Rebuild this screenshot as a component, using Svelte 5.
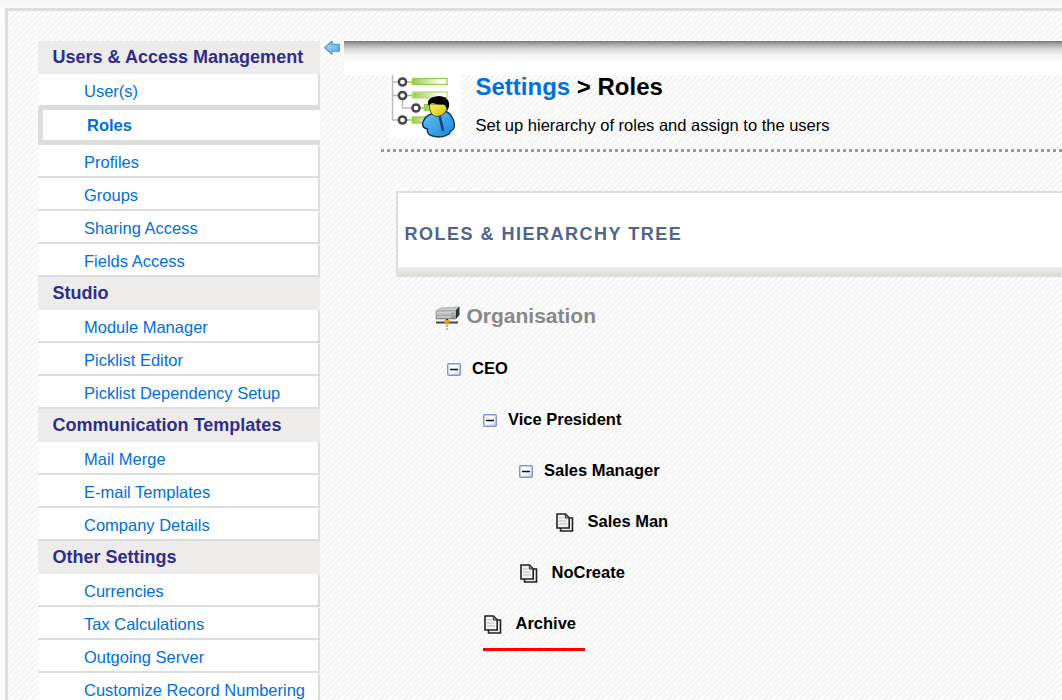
<script>
  const groups = [
    { title: 'Users & Access Management', items: ['User(s)', 'Roles', 'Profiles', 'Groups', 'Sharing Access', 'Fields Access'] },
    { title: 'Studio', items: ['Module Manager', 'Picklist Editor', 'Picklist Dependency Setup'] },
    { title: 'Communication Templates', items: ['Mail Merge', 'E-mail Templates', 'Company Details'] },
    { title: 'Other Settings', items: ['Currencies', 'Tax Calculations', 'Outgoing Server', 'Customize Record Numbering'] }
  ];
  const active = 'Roles';
  const roles = [
    { name: 'CEO', depth: 0, parent: true },
    { name: 'Vice President', depth: 1, parent: true },
    { name: 'Sales Manager', depth: 2, parent: true },
    { name: 'Sales Man', depth: 3 },
    { name: 'NoCreate', depth: 2 },
    { name: 'Archive', depth: 1, marked: true }
  ];
</script>

<div class="page">
  <div class="frame">
    <nav>
      {#each groups as group}
        <h3>{group.title}</h3>
        {#each group.items as item, i}
          <a href="#top" class:active={item === active} class:before={group.items[i + 1] === active}>{item}</a>
        {/each}
      {/each}
    </nav>
    <svg class="arrow" width="17" height="15" viewBox="0 0 17 15">
      <defs><linearGradient id="ar" x2="1" y2="1"><stop stop-color="#a9dcf9" /><stop offset="1" stop-color="#58aeea" /></linearGradient></defs>
      <path d="M.8 7.7 8 1.2V4.4H15.3V11.2H8V14.2Z" fill="url(#ar)" stroke="#4e9acb" stroke-width="1.2" stroke-linejoin="round" />
      <path d="M12.7 4.7v6" stroke="#6cb2df" />
    </svg>
    <main>
      <div class="shade"></div>
      <header>
        <svg class="logo" width="72" height="67" viewBox="0 0 72 67">
          <defs>
            <linearGradient id="bar"><stop stop-color="#9cc94d" /><stop offset=".85" stop-color="#fff" /></linearGradient>
            <linearGradient id="face" x2="1" y2="1"><stop stop-color="#fff568" /><stop offset="1" stop-color="#c5bd00" /></linearGradient>
            <linearGradient id="coat" x2="1" y2="1"><stop stop-color="#68c5fb" /><stop offset="1" stop-color="#1686d5" /></linearGradient>
            <radialGradient id="shadow"><stop stop-color="#888" /><stop offset="1" stop-color="#fff" stop-opacity="0" /></radialGradient>
          </defs>
          <rect width="72" height="63" fill="#fff" />
          <path d="M3.5 0V45H10M3.5 7H10M3.5 20.5H10M13.5 24V33H24" fill="none" stroke="#bbb" stroke-width="1.5" />
          <g stroke="#9acb4a" stroke-width="1.3" fill="url(#bar)">
            <path d="M17 7H24M17 20.5H24M31 33H36M17 45H24" />
            <rect x="23.5" y="3.5" width="34.5" height="6" />
            <rect x="23.5" y="17" width="34.5" height="6" stroke="#b9dc82" />
            <rect x="35.5" y="29.5" width="22" height="6" />
            <rect x="23.5" y="42" width="24" height="6" />
          </g>
          <g fill="#fff" stroke="#484848" stroke-width="2.5">
            <circle cx="13.5" cy="7" r="3.6" /><circle cx="13.5" cy="20.5" r="3.6" />
            <circle cx="27" cy="33" r="3.6" /><circle cx="13.5" cy="45" r="3.6" />
          </g>
          <ellipse cx="55" cy="58" rx="17" ry="6" fill="url(#shadow)" />
          <path d="M42 39Q36 41 33.7 48Q33 53 38.5 54Q37.5 59 42 60.5Q52 64 60 59Q61 56 64.5 54Q67 50 63.5 43Q61 38 57 36.5Z" fill="url(#coat)" stroke="#17344f" stroke-width="1.4" />
          <path d="M50.5 41 53 51 54 56" fill="none" stroke="#123f86" stroke-width="2.6" />
          <path d="M40.5 29Q40 41 48 41.5Q58 41 59 29Z" fill="url(#face)" stroke="#333" stroke-width=".8" />
          <path d="M39.5 31Q37 25 43 22.5Q50 19.5 56.5 22.5Q61 26 60 32L58 36Q58 32 55 29.5Q48 30 44 28Q41 28 39.5 31Z" fill="#050505" />
        </svg>
        <div class="titles">
          <h1><a href="#top">Settings</a> &gt; Roles</h1>
          <p>Set up hierarchy of roles and assign to the users</p>
        </div>
      </header>
      <section>
        <h2>Roles &amp; Hierarchy Tree</h2>
        <div class="lip"></div>
      </section>
      <div class="tree">
        <div class="org">
          <svg width="26" height="25" viewBox="0 0 26 25">
            <defs><linearGradient id="srv" x2="0" y2="1"><stop stop-color="#e2e2e2" /><stop offset=".4" stop-color="#bbb" /><stop offset="1" stop-color="#858585" /></linearGradient></defs>
            <path d="M5 3 24 2 21 6H1Z" fill="#ccc" stroke="#999" stroke-width=".6" />
            <path d="M1 6H21V14H1Z" fill="url(#srv)" stroke="#888" stroke-width=".7" />
            <path d="M21 5 24.5 1.5V10L21 14Z" fill="#333" />
            <path d="M2 12H16" stroke="#e8e8e8" /><path d="M16 8.5H19" stroke="#43d44f" stroke-width="2" />
            <path d="M12 14V18M1 17.5H23" stroke="#444" stroke-width="2.2" />
            <path d="M9.5 15H14.5V19.5H9.5Z" fill="#ee9c24" /><path d="M12 20V25" stroke="#999" stroke-width="1.4" stroke-dasharray="2 1" />
          </svg>
          <b>Organisation</b>
        </div>
        {#each roles as role}
          <div class="role" style:padding-left="{role.depth * 36}px">
            {#if role.parent}
              <svg class="toggle" width="14" height="13" viewBox="0 0 14 13">
                <defs><linearGradient id="tg" x2="1" y2="1"><stop offset=".4" stop-color="#fff" /><stop offset="1" stop-color="#cbd6ef" /></linearGradient></defs>
                <rect x=".75" y=".75" width="12.5" height="11.5" rx="1" fill="url(#tg)" stroke="#8496cf" stroke-width="1.5" />
                <path d="M3 6.5H11" stroke="#111" stroke-width="1.5" />
              </svg>
            {:else}
              <svg class="doc" width="18" height="19" viewBox="0 0 18 19">
                <path d="M4.5 5H16.5V18H4.5Z" fill="#eee" stroke="#222" stroke-width="1.6" />
                <path d="M1 1H9.5L13.2 4.8V15H1Z" fill="#f2f2f2" stroke="#222" stroke-width="1.6" />
                <path d="M9.3 1V5H13.3Z" fill="#999" stroke="#333" />
                <path d="M3 5H7.5M3 8H10M3 11H11" stroke="#bbb" />
              </svg>
            {/if}
            <b>{role.name}</b>
            {#if role.marked}<i></i>{/if}
          </div>
        {/each}
      </div>
    </main>
  </div>
</div>

<style>
  :global(body) { overflow: hidden; font-family: "Liberation Sans", Arial, sans-serif; }
  .page { box-sizing: border-box; width: 1062px; height: 700px; padding: 8px 0 0 5px; overflow: hidden; background: linear-gradient(#f7f7f7, #fff 22px); }
  .frame { box-sizing: border-box; height: 800px; display: flex; align-items: flex-start; padding: 30px 0 0 30px; border: solid #ddd; border-width: 3px 0 0 3px; background: repeating-linear-gradient(135deg, #fff 0 1.4px, #f1f1f1 2.4px 3.2px, #fff 4.2426px); }
  a { color: #0070d9; text-decoration: none; }
  nav { width: 282px; flex: none; }
  h3 { box-sizing: border-box; height: 33px; margin: 0; padding-left: 14.5px; background: #eeeceb; color: #2f2d8b; font-size: 18.03px; line-height: 32px; white-space: nowrap; }
  nav a { box-sizing: border-box; display: block; height: 33px; padding-left: 46px; border: solid #ddd; border-width: 0 2px 2px 0; border-top-right-radius: 3px; background: #fff; font-size: 16.5px; line-height: 35px; white-space: nowrap; }
  nav a.before { height: 31px; border-bottom: 0; }
  nav a.active { height: 40px; padding-left: 44px; border-width: 5px 0 5px 5px; border-radius: 3px 0 0 0; font-weight: bold; line-height: 31px; }
  .arrow { flex: none; width: 17px; margin: -1px 3px 0 4px; }
  main { flex: 1; min-width: 0; }
  .shade { height: 34px; background: linear-gradient(#777 0, #a5a5a5 3px, #d7d7d7 8px, #f6f6f6 15px, #fff 21px); }
  header { display: flex; height: 74px; margin-left: 37px; padding-left: 8px; border-bottom: 3px dotted #999; }
  header .titles { margin-left: 14.5px; }
  h1 { margin: -2px 0 0; font-size: 24px; line-height: 28px; }
  p { margin: 14px 0 0; font-size: 16.5px; line-height: 21px; }
  section { box-sizing: border-box; height: 86px; margin: 39px 0 0 52px; border: solid #ddd; border-width: 2px 0 2px 2px; background: #fff; }
  h2 { height: 74px; margin: 0; padding-left: 6.5px; color: #51658c; font-size: 18px; line-height: 83px; letter-spacing: 1.5px; text-transform: uppercase; }
  .lip { height: 8px; background: linear-gradient(#efefea, #ddddd7); }
  .tree { padding: 28px 0 0 103px; }
  .org { display: flex; height: 38px; margin-left: -12px; gap: 5.5px; color: #888; font-size: 21px; line-height: 22px; }
  .role { display: flex; position: relative; height: 51px; align-items: center; font-size: 16.5px; line-height: 20px; }
  .role b { margin: -2px 0 0 11px; }
  .toggle { margin-top: 2px; }
  .doc { margin: 1px 0 0 1px; }
  .doc + b { margin-left: 13.5px; }
  .role i { position: absolute; left: 36px; top: 50px; width: 102px; height: 3px; background: #f00; }
</style>
